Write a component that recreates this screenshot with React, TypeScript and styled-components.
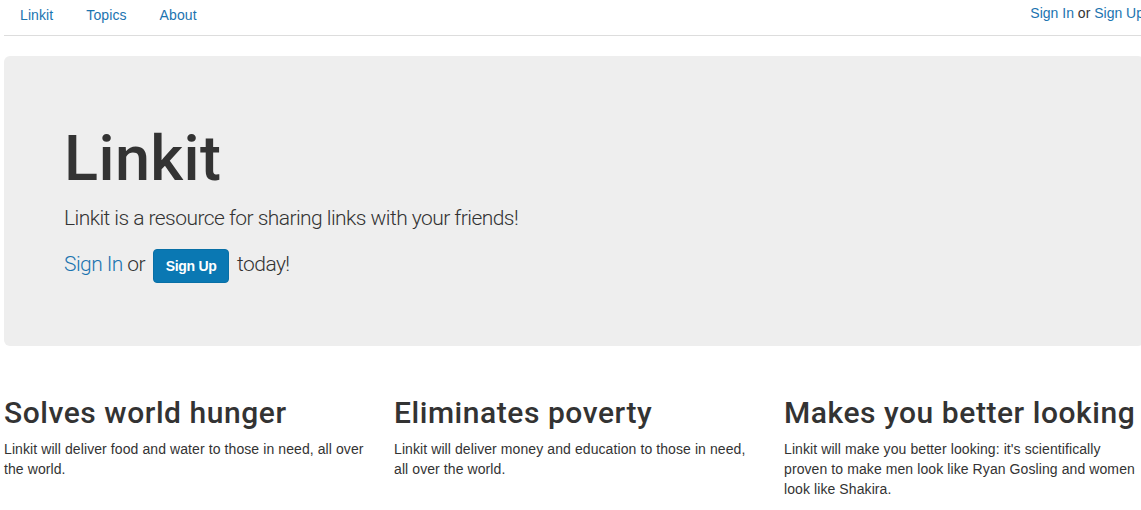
import React from "react";
import styled, { createGlobalStyle } from "styled-components";

const Global = createGlobalStyle`
  html, body { margin: 0; padding: 0; background: #fff; }
  body {
    font-family: "Liberation Sans", Arial, Helvetica, sans-serif;
    font-size: 14px;
    line-height: 20px;
    color: #333;
    overflow: hidden;
  }
  * { box-sizing: border-box; }
`;

const Page = styled.div`
  margin-left: 4px;
  width: 1140px;
`;

const Nav = styled.nav`
  height: 36px;
  border-bottom: 1px solid #ddd;
  display: flex;
  justify-content: space-between;
  align-items: flex-start;
`;

const NavList = styled.ul`
  list-style: none;
  margin: 0;
  padding: 5px 0 0 0;
  display: flex;
`;

const NavLink = styled.a`
  display: block;
  padding: 0 17px 0 16px;
  color: #1b74b0;
  text-decoration: none;
  font-size: 14px;
  line-height: 20px;
  letter-spacing: 0.1px;
`;

const NavRight = styled.p`
  margin: 0;
  padding-top: 3px;
  font-size: 14px;
  line-height: 20px;
  color: #333;
`;

const Link = styled.a`
  color: #1b74b0;
  text-decoration: none;
`;

const Jumbotron = styled.section`
  margin-top: 20px;
  margin-bottom: 30px;
  background: #eee;
  border-radius: 6px;
  padding: 48px 60px;
  width: 1140px;
`;

const Title = styled.h1`
  margin: 20px 0 10px;
  font-family: Roboto, "Liberation Sans", sans-serif;
  font-size: 63px;
  line-height: 69px;
  font-weight: 500;
  letter-spacing: 0.4px;
  color: #333;
`;

const Lead = styled.p`
  margin: 0 0 15px;
  font-family: Roboto, "Liberation Sans", sans-serif;
  font-size: 21px;
  line-height: 30px;
  font-weight: 300;
  letter-spacing: -0.55px;
  color: #333;
`;

const LeadLink = styled.a`
  color: #1b74b0;
  text-decoration: none;
`;

const Button = styled.a`
  display: inline-block;
  padding: 6px 12px;
  margin: 1px 3px 0;
  font-family: "Liberation Sans", Arial, sans-serif;
  font-size: 14px;
  line-height: 20px;
  font-weight: 700;
  letter-spacing: -0.3px;
  color: #fff;
  background: #0a78b3;
  border: 1px solid #086fa6;
  border-radius: 4px;
  text-decoration: none;
  vertical-align: middle;
`;

const Row = styled.div`
  display: grid;
  grid-template-columns: repeat(3, 360px);
  column-gap: 30px;
`;

const Feature = styled.div``;

const FeatureTitle = styled.h2`
  margin: 20px 0 10px;
  font-family: Roboto, "Liberation Sans", sans-serif;
  font-size: 30px;
  line-height: 33px;
  font-weight: 500;
  letter-spacing: 0.55px;
  color: #333;
  white-space: nowrap;
`;

const FeatureText = styled.p`
  margin: 0 0 10px;
  font-size: 14px;
  line-height: 20px;
  letter-spacing: 0.09px;
`;

const features = [
  {
    title: "Solves world hunger",
    text: "Linkit will deliver food and water to those in need, all over the world.",
  },
  {
    title: "Eliminates poverty",
    text: "Linkit will deliver money and education to those in need, all over the world.",
  },
  {
    title: "Makes you better looking",
    text: "Linkit will make you better looking: it's scientifically proven to make men look like Ryan Gosling and women look like Shakira.",
  },
];

export default function App() {
  return (
    <>
      <Global />
      <Page>
        <Nav>
          <NavList>
            <li><NavLink href="#">Linkit</NavLink></li>
            <li><NavLink href="#">Topics</NavLink></li>
            <li><NavLink href="#">About</NavLink></li>
          </NavList>
          <NavRight>
            <Link href="#">Sign In</Link> or <Link href="#">Sign Up</Link>
          </NavRight>
        </Nav>
        <Jumbotron>
          <Title>Linkit</Title>
          <Lead>Linkit is a resource for sharing links with your friends!</Lead>
          <Lead>
            <LeadLink href="#">Sign In</LeadLink> or <Button href="#">Sign Up</Button> today!
          </Lead>
        </Jumbotron>
        <Row>
          {features.map((f) => (
            <Feature key={f.title}>
              <FeatureTitle>{f.title}</FeatureTitle>
              <FeatureText>{f.text}</FeatureText>
            </Feature>
          ))}
        </Row>
      </Page>
    </>
  );
}
